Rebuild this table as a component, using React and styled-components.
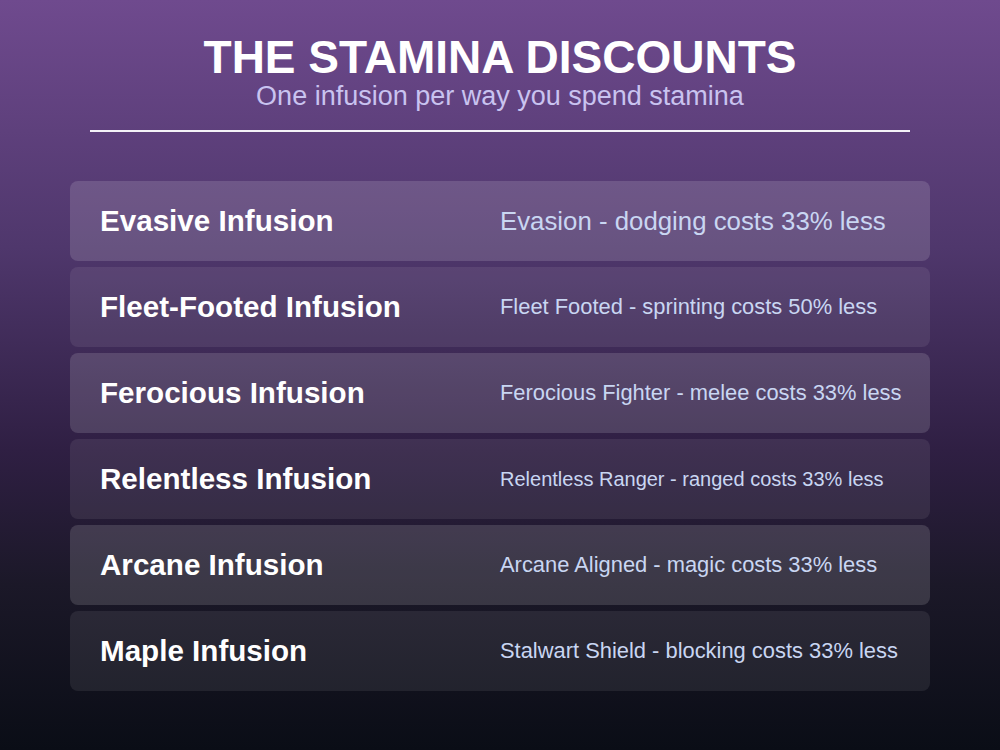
import React from "react";
import styled, { createGlobalStyle } from "styled-components";

const GlobalStyle = createGlobalStyle`
  html, body {
    margin: 0;
    padding: 0;
    background: #0a0d16;
  }
  * { box-sizing: border-box; }
`;

const Page = styled.div`
  width: 1000px;
  height: 750px;
  overflow: hidden;
  background: linear-gradient(
    180deg,
    #6f4a8e 0%,
    #4f376c 33%,
    #2f1f43 60%,
    #1b1828 78%,
    #0a0d16 100%
  );
  font-family: "Liberation Sans", Arial, sans-serif;
  display: flex;
  flex-direction: column;
  align-items: center;
  padding-top: 33px;
`;

const Title = styled.h1`
  margin: 0;
  font-size: 46px;
  line-height: 48px;
  font-weight: 700;
  color: #ffffff;
  text-align: center;
`;

const Subtitle = styled.p`
  margin: 0;
  font-size: 27px;
  line-height: 30px;
  color: #c9c3f0;
  text-align: center;
`;

const Divider = styled.hr`
  width: 820px;
  height: 2px;
  margin: 19px 0 0;
  border: 0;
  background: #f4f2f8;
`;

const List = styled.div`
  width: 860px;
  margin-top: 49px;
  display: flex;
  flex-direction: column;
  gap: 6px;
`;

const Row = styled.div`
  height: 80px;
  border-radius: 8px;
  padding: 0 30px;
  display: grid;
  grid-template-columns: minmax(0, 1fr) minmax(0, 1fr);
  align-items: center;
  background: ${(p) =>
    p.$tone === "light" ? "rgba(255, 255, 255, 0.14)" : "rgba(255, 255, 255, 0.08)"};
`;

const Name = styled.div`
  font-size: 29.6px;
  font-weight: 700;
  color: #ffffff;
  white-space: nowrap;
`;

const Desc = styled.div`
  font-size: ${(p) => p.$size}px;
  color: #c9d6f2;
  white-space: nowrap;
`;

const items = [
  ["Evasive Infusion", "Evasion - dodging costs 33% less", 25.8],
  ["Fleet-Footed Infusion", "Fleet Footed - sprinting costs 50% less", 21.9],
  ["Ferocious Infusion", "Ferocious Fighter - melee costs 33% less", 21.9],
  ["Relentless Infusion", "Relentless Ranger - ranged costs 33% less", 20],
  ["Arcane Infusion", "Arcane Aligned - magic costs 33% less", 21.9],
  ["Maple Infusion", "Stalwart Shield - blocking costs 33% less", 21.9],
];

export default function App() {
  return (
    <>
      <GlobalStyle />
      <Page>
        <Title>THE STAMINA DISCOUNTS</Title>
        <Subtitle>One infusion per way you spend stamina</Subtitle>
        <Divider />
        <List>
          {items.map(([name, desc, size], i) => (
            <Row key={name} $tone={i % 2 === 0 ? "light" : "dark"}>
              <Name>{name}</Name>
              <Desc $size={size}>{desc}</Desc>
            </Row>
          ))}
        </List>
      </Page>
    </>
  );
}
